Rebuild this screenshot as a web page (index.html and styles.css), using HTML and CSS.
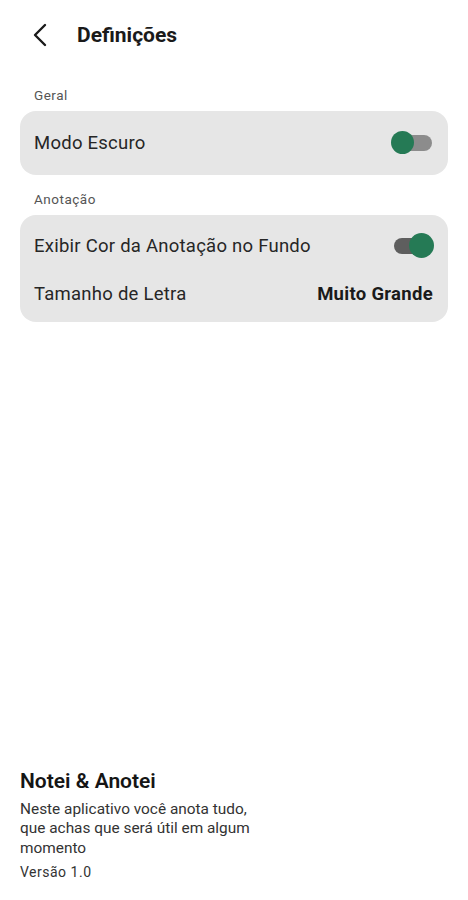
FILE: index.html
```html
<!DOCTYPE html>
<html lang="pt">
<head>
  <meta charset="UTF-8" />
  <meta name="viewport" content="width=device-width, initial-scale=1.0" />
  <title>Definições</title>
  <link rel="stylesheet" href="styles.css">
</head>
<body>
  <!-- Top bar -->
  <header class="top-bar">
    <button class="back-btn" aria-label="Voltar">
      <svg width="14" height="24" viewBox="0 0 14 24" fill="none" stroke="#1a1a1a" stroke-width="2.4" stroke-linecap="round" stroke-linejoin="round">
        <path d="M12 2 L2 12 L12 22" />
      </svg>
    </button>
    <h1>Definições</h1>
  </header>

  <main class="settings">
    <!-- Geral -->
    <p class="section-label">Geral</p>
    <div class="card">
      <div class="row">
        <span>Modo Escuro</span>
        <span class="switch"><span class="knob"></span></span>
      </div>
    </div>

    <!-- Anotação -->
    <p class="section-label">Anotação</p>
    <div class="card">
      <div class="row">
        <span>Exibir Cor da Anotação no Fundo</span>
        <span class="switch on"><span class="knob"></span></span>
      </div>
      <div class="row">
        <span>Tamanho de Letra</span>
        <b class="value">Muito Grande</b>
      </div>
    </div>
  </main>

  <!-- About -->
  <footer class="about">
    <h2>Notei &amp; Anotei</h2>
    <p class="desc">Neste aplicativo você anota tudo,<br>que achas que será útil em algum<br>momento</p>
    <p class="version">Versão 1.0</p>
  </footer>
</body>
</html>
```

FILE: styles.css
```css
/* Global */
html, body {
  height: 100%;
}
body {
  margin: 0;
  background: #fff;
  color: #1c1c1c;
  font-family: Roboto, "Noto Sans", Arial, sans-serif;
  display: flex;
  flex-direction: column;
}
h1, h2, p {
  margin: 0;
}

/* Top bar */
.top-bar {
  display: flex;
  align-items: center;
  height: 70px;
  padding: 0 0 0 33px;
  gap: 30px;
}
.back-btn {
  border: none;
  background: none;
  padding: 0;
  display: flex;
}
.top-bar h1 {
  font-size: 21px;
  font-weight: 700;
  color: #1a1a1a;
}

/* Settings list */
.settings {
  padding: 0 20px;
}
.section-label {
  font-size: 13.5px;
  letter-spacing: 0.5px;
  line-height: 16px;
  color: #555;
  padding: 16px 0 8px 14px;
}
.settings .section-label:first-child {
  padding-top: 17px;
}
.card {
  background: #e6e6e6;
  border-radius: 16px;
  padding: 8px 14px;
}
.card + .section-label {
  padding-top: 16px;
}
.card .row {
  display: flex;
  align-items: center;
  justify-content: space-between;
  height: 48px;
  font-size: 18.5px;
  letter-spacing: 0.25px;
  color: #262626;
}
.card .row:first-child:not(:last-child) {
  margin-top: -1px;
}
.card .row + .row {
  height: 47px;
  margin-bottom: -3px;
}
.value {
  font-weight: 700;
  font-size: 18.5px;
  letter-spacing: 0.3px;
  color: #1a1a1a;
  margin-right: 1px;
}

/* Switch */
.switch {
  position: relative;
  width: 38px;
  height: 16px;
  border-radius: 8px;
  background: #8c8c8c;
  margin-right: 2px;
}
.switch .knob {
  position: absolute;
  top: -4px;
  left: -3px;
  width: 23px;
  height: 23px;
  border-radius: 50%;
  background: #257a55;
}
.switch.on {
  background: #5e5e5e;
}
.switch.on .knob {
  left: auto;
  right: -2px;
  top: -5px;
  width: 25px;
  height: 25px;
}

/* About */
.about {
  margin-top: auto;
  padding: 0 20px 20px;
}
.about h2 {
  font-size: 21px;
  font-weight: 600;
  color: #151515;
  margin-bottom: 7px;
}
.about .desc {
  font-size: 15.4px;
  line-height: 19.5px;
  color: #333;
}
.about .version {
  font-size: 14px;
  color: #333;
  margin-top: 6px;
  letter-spacing: 0.5px;
}
```
